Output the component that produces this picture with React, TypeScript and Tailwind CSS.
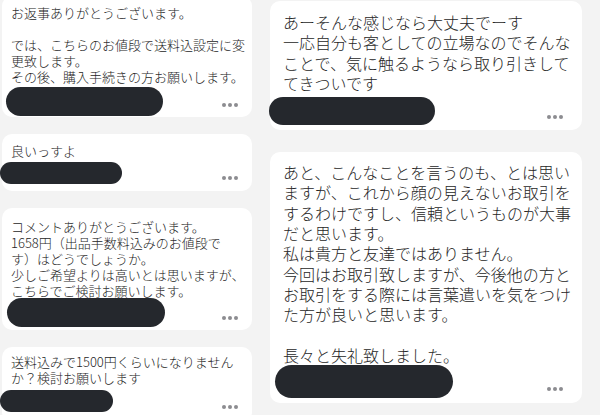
import React from "react";

function Dots({ mb, mr }: { mb: string; mr: string }) {
  return (
    <div className={`flex gap-[2px] ${mb} ${mr}`}>
      <span className="w-[4px] h-[4px] rounded-full bg-[#8c8c90]" />
      <span className="w-[4px] h-[4px] rounded-full bg-[#8c8c90]" />
      <span className="w-[4px] h-[4px] rounded-full bg-[#8c8c90]" />
    </div>
  );
}

function Lines({ lines }: { lines: string[] }) {
  return (
    <div className="whitespace-pre">
      {lines.map((l, i) => (
        <div key={i}>{l === "" ? "\u00a0" : l}</div>
      ))}
    </div>
  );
}

export default function App() {
  return (
    <div className="w-[600px] h-[415px] overflow-hidden bg-[#f3f3f3] flex font-['Noto_Sans_CJK_JP','Noto_Sans',sans-serif] font-light text-[#262626]">
      {/* left column */}
      <div className="w-[250px] ml-[2px] mt-[-4px] flex flex-col gap-[17px] shrink-0">
        <div className="bg-white rounded-[10px] pt-[9px] pl-[9px] pr-[4px] pb-[1px] text-[13px] leading-[16px]">
          <Lines
            lines={[
              "お返事ありがとうございます。",
              "",
              "では、こちらのお値段で送料込設定に変",
              "更致します。",
              "その後、購入手続きの方お願いします。",
            ]}
          />
          <div className="flex items-end justify-between mt-[2px]">
            <div className="ml-[-5px] w-[157px] h-[29px] rounded-full bg-[#25282d]" />
            <Dots mb="mb-[9px]" mr="mr-[10px]" />
          </div>
        </div>

        <div className="bg-white rounded-[10px] pt-[9px] pl-[9px] pr-[4px] pb-[7px] text-[13px] leading-[16px]">
          <Lines lines={["良いっすよ"]} />
          <div className="flex items-end justify-between mt-[3px]">
            <div className="ml-[-11px] w-[122px] h-[22px] rounded-full bg-[#25282d]" />
            <Dots mb="mb-[4px]" mr="mr-[10px]" />
          </div>
        </div>

        <div className="bg-white rounded-[10px] pt-[11px] pl-[9px] pr-[4px] pb-[3px] text-[13px] leading-[16px]">
          <Lines
            lines={[
              "コメントありがとうございます。",
              "1658円（出品手数料込みのお値段で",
              "す）はどうでしょうか。",
              "少しご希望よりは高いとは思いますが、",
              "こちらでご検討お願いします。",
            ]}
          />
          <div className="flex items-end justify-between mt-[-1px]">
            <div className="ml-[-4px] w-[158px] h-[29px] rounded-full bg-[#25282d]" />
            <Dots mb="mb-[7px]" mr="mr-[10px]" />
          </div>
        </div>

        <div className="bg-white rounded-[10px] pt-[7px] pl-[9px] pr-[4px] pb-[10px] text-[13px] leading-[16px]">
          <Lines lines={["送料込みで1500円くらいになりません", "か？検討お願いします"]} />
          <div className="flex items-end justify-between mt-[4px]">
            <div className="ml-[-11px] w-[113px] h-[22px] rounded-full bg-[#25282d]" />
            <Dots mb="mb-[3px]" mr="mr-[10px]" />
          </div>
        </div>
      </div>

      {/* right column */}
      <div className="w-[312px] ml-[18px] mt-[1px] flex flex-col gap-[22px] shrink-0">
        <div className="bg-white rounded-[10px] pt-[11px] pl-[13px] pr-[9px] pb-[5px] text-[16px] leading-[20.3px]">
          <Lines
            lines={[
              "あーそんな感じなら大丈夫でーす",
              "一応自分も客としての立場なのでそんな",
              "ことで、気に触るようなら取り引きして",
              "てきついです",
            ]}
          />
          <div className="flex items-end justify-between mt-[4px]">
            <div className="ml-[-14px] w-[166px] h-[28px] rounded-full bg-[#25282d]" />
            <Dots mb="mb-[6px]" mr="mr-[10px]" />
          </div>
        </div>

        <div className="bg-white rounded-[10px] pt-[10px] pl-[13px] pr-[9px] pb-[5px] text-[16px] leading-[20.3px]">
          <Lines
            lines={[
              "あと、こんなことを言うのも、とは思い",
              "ますが、これから顔の見えないお取引を",
              "するわけですし、信頼というものが大事",
              "だと思います。",
              "私は貴方と友達ではありません。",
              "今回はお取引致しますが、今後他の方と",
              "お取引をする際には言葉遣いを気をつけ",
              "た方が良いと思います。",
              "",
              "長々と失礼致しました。",
            ]}
          />
          <div className="flex items-end justify-between">
            <div className="ml-[-8px] w-[178px] h-[33px] rounded-full bg-[#25282d]" />
            <Dots mb="mb-[7px]" mr="mr-[10px]" />
          </div>
        </div>
      </div>
    </div>
  );
}
